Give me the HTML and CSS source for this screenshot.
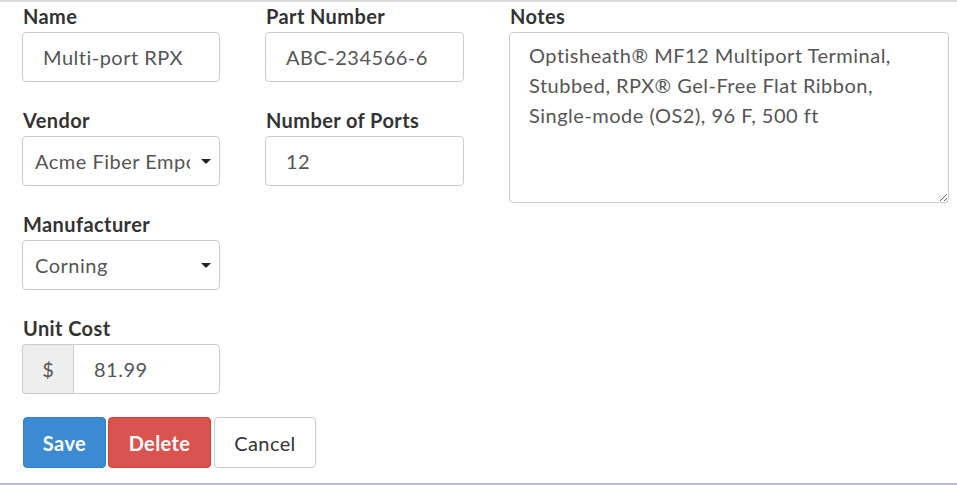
FILE: index.html
```html
<!DOCTYPE html>
<html>
<head>
<meta charset="utf-8">
<link rel="stylesheet" href="styles.css">
</head>
<body>
<form class="form">
  <div class="grid">
    <div class="col col-a">
      <div class="field">
        <label class="label">Name</label>
        <input class="control" type="text" value="Multi-port RPX">
      </div>
      <div class="field">
        <label class="label">Vendor</label>
        <div class="select-wrap">
          <select class="control select"><option>Acme Fiber Emporium</option></select>
        </div>
      </div>
      <div class="field">
        <label class="label">Manufacturer</label>
        <div class="select-wrap">
          <select class="control select"><option>Corning</option></select>
        </div>
      </div>
      <div class="field">
        <label class="label">Unit Cost</label>
        <div class="input-group">
          <span class="addon">$</span>
          <input class="control group-input" type="text" value="81.99">
        </div>
      </div>
    </div>
    <div class="col col-b">
      <div class="field">
        <label class="label">Part Number</label>
        <input class="control" type="text" value="ABC-234566-6">
      </div>
      <div class="field">
        <label class="label">Number of Ports</label>
        <input class="control" type="text" value="12">
      </div>
    </div>
    <div class="col col-c">
      <div class="field">
        <label class="label">Notes</label>
        <textarea class="control notes">Optisheath® MF12 Multiport Terminal, Stubbed, RPX® Gel-Free Flat Ribbon, Single-mode (OS2), 96 F, 500 ft</textarea>
      </div>
    </div>
  </div>
  <div class="actions">
    <button type="button" class="btn btn-save">Save</button>
    <button type="button" class="btn btn-delete">Delete</button>
    <button type="button" class="btn btn-cancel">Cancel</button>
  </div>
</form>
</body>
</html>
```
FILE: styles.css
```css
html, body {
  margin: 0;
  padding: 0;
  background: #fff;
}
body {
  font-family: Lato, "Open Sans", sans-serif;
  color: #333;
  width: 957px;
  height: 485px;
  overflow: hidden;
}
.form {
  border-top: 2px solid #d9d9d9;
  border-bottom: 2px solid #b7bfcd;
  height: 485px;
  padding: 0 0 0 22px;
  box-sizing: border-box;
  display: flex;
  flex-direction: column;
}
.grid {
  display: flex;
  gap: 45px;
  padding-top: 2px;
}
.col {
  display: flex;
  flex-direction: column;
  gap: 26px;
}
.col-a { width: 198px; }
.col-b { width: 199px; }
.col-c { width: 440px; }
.field {
  display: flex;
  flex-direction: column;
}
.label {
  font-weight: 700;
  font-size: 20px;
  letter-spacing: 0.4px;
  line-height: 25px;
  padding-bottom: 3px;
  color: #333;
  padding-left: 1px;
}
.control {
  font-family: Lato, "Open Sans", sans-serif;
  font-size: 20px;
  letter-spacing: 0.5px;
  color: #555;
  height: 50px;
  box-sizing: border-box;
  border: 1px solid #ccc;
  border-radius: 4px;
  padding: 0 20px;
  background: #fff;
  outline: none;
  width: 100%;
  margin: 0;
}
.select-wrap {
  position: relative;
}
.select {
  appearance: none;
  -webkit-appearance: none;
  padding: 0 29px 0 12px;
}
.select-wrap::after {
  content: "";
  position: absolute;
  right: 9px;
  top: 23px;
  border-left: 5px solid transparent;
  border-right: 5px solid transparent;
  border-top: 5px solid #222;
  pointer-events: none;
}
.input-group {
  display: flex;
  height: 50px;
}
.addon {
  width: 51px;
  flex-shrink: 0;
  box-sizing: border-box;
  background: #eee;
  border: 1px solid #ccc;
  border-right: none;
  border-radius: 4px 0 0 4px;
  display: flex;
  align-items: center;
  justify-content: center;
  font-size: 20px;
  color: #555;
}
.group-input {
  flex: 1;
  width: 0;
  min-width: 0;
  border-radius: 0 4px 4px 0;
}
.notes {
  height: 171px;
  padding: 7px 19px;
  line-height: 30px;
  resize: vertical;
}
.actions {
  display: flex;
  margin-top: 23px;
}
.btn {
  font-family: Lato, "Open Sans", sans-serif;
  font-size: 20px;
  letter-spacing: 0.4px;
  height: 51px;
  border-radius: 4px;
  border: 1px solid transparent;
  padding: 0;
  margin: 0;
  cursor: pointer;
}
.btn-save {
  background: #3b8ad2;
  border-color: #3580c4;
  color: #fff;
  font-weight: 700;
  width: 83px;
  margin-left: 1px;
}
.btn-delete {
  background: #d9534f;
  border-color: #d43f3a;
  color: #fff;
  font-weight: 700;
  width: 103px;
  margin-left: 2px;
}
.btn-cancel {
  background: #fff;
  border-color: #ccc;
  color: #333;
  width: 102px;
  margin-left: 3px;
}
```
